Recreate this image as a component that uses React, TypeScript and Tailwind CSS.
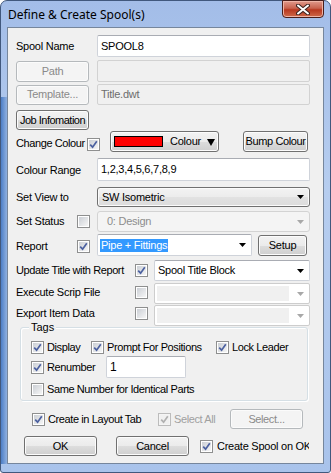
import { ReactNode } from "react";

const font =
  "font-['Liberation_Sans',Arial,sans-serif] text-[11px] leading-[13px] tracking-[-0.25px] whitespace-nowrap";

function Check({ checked, disabled }: { checked?: boolean; disabled?: boolean }) {
  return (
    <span
      className={`w-[13px] h-[13px] shrink-0 border p-[1px] flex ${
        disabled ? "border-[#bcbcbc] bg-[#f4f4f4]" : "border-[#8e8f8f] bg-white"
      }`}
    >
      <span
        className={`flex-1 flex items-center justify-center ${
          disabled ? "bg-[#f0f0f0]" : "bg-[linear-gradient(135deg,#cbcfd5,#f6f6f6)]"
        }`}
      >
        {checked && (
          <svg width="9" height="9" viewBox="0 0 9 9">
            <path
              d="M1.2 4.6 L3.6 7.2 L7.8 1.2"
              fill="none"
              stroke={disabled ? "#b0b0b0" : "#4c61a0"}
              strokeWidth="1.7"
            />
          </svg>
        )}
      </span>
    </span>
  );
}

function Btn({
  children,
  w,
  disabled,
  h = "h-[21px]",
}: {
  children: ReactNode;
  w: string;
  disabled?: boolean;
  h?: string;
}) {
  return (
    <div
      className={`${w} ${h} shrink-0 rounded-[3px] border flex items-center justify-center ${
        disabled
          ? "border-[#b5b9bc] bg-[#f4f4f4] text-[#8a8a8a] shadow-[inset_0_0_0_1px_#fbfbfb]"
          : "border-[#707070] text-black bg-[linear-gradient(#f2f2f2,#ebebeb_50%,#dddddd_50%,#cfcfcf)] shadow-[inset_0_0_0_1px_#fcfcfc]"
      }`}
    >
      {children}
    </div>
  );
}

function Arrow({ grey }: { grey?: boolean }) {
  return (
    <svg width="7" height="4" viewBox="0 0 7 4" className="shrink-0">
      <path d="M0 0h7L3.5 4z" fill={grey ? "#a8a8a8" : "#000"} />
    </svg>
  );
}

function Box({
  w,
  h,
  children,
  disabled,
}: {
  w: string;
  h: string;
  children?: ReactNode;
  disabled?: boolean;
}) {
  return (
    <div
      className={`${w} ${h} shrink-0 rounded-[2px] border flex items-center pl-[3px] ${
        disabled
          ? "border-[#d2d2d2] bg-[#f0f0f0] text-[#6d6d6d]"
          : "border-[#cfd3da] border-t-[#a9acb3] bg-white text-black"
      }`}
    >
      {children}
    </div>
  );
}

function Combo({
  w,
  h = "h-[21px]",
  kind,
  children,
}: {
  w: string;
  h?: string;
  kind: "list" | "edit" | "disabled" | "empty";
  children?: ReactNode;
}) {
  if (kind === "list") {
    return (
      <div
        className={`${w} ${h} shrink-0 rounded-[3px] border border-[#707070] bg-[linear-gradient(#f3f3f3,#ececec_50%,#e2e2e2_50%,#dcdcdc)] shadow-[inset_0_0_0_1px_#fbfbfb] flex items-center pl-[4px] pr-[5px]`}
      >
        <span className="flex-1">{children}</span>
        <Arrow />
      </div>
    );
  }
  if (kind === "disabled") {
    return (
      <div
        className={`${w} ${h} shrink-0 rounded-[3px] border border-[#d3d3d3] bg-[#f4f4f4] flex items-center pl-[9px] pr-[5px] text-[#8d8d8d]`}
      >
        <span className="flex-1">{children}</span>
        <Arrow grey />
      </div>
    );
  }
  if (kind === "empty") {
    return (
      <div
        className={`${w} ${h} shrink-0 rounded-[2px] border border-[#cdcdcd] bg-white flex items-center p-[2px] pr-[5px]`}
      >
        <span className="flex-1 self-stretch bg-[#f0f0f0] mr-[8px]" />
        <Arrow grey />
      </div>
    );
  }
  return (
    <div
      className={`${w} ${h} shrink-0 rounded-[2px] border border-[#cfd3da] border-t-[#a9acb3] bg-white flex items-center pl-[2px] pr-[5px]`}
    >
      <span className="flex-1 flex">{children}</span>
      <Arrow />
    </div>
  );
}

export default function App() {
  return (
    <div
      className={`w-[331px] h-[473px] rounded-t-[7px] rounded-b-[3px] border border-[#41587d] bg-[linear-gradient(180deg,#a3bde8,#b6cdef_40%,#a9c3eb)] flex flex-col ${font}`}
    >
      <div className="h-[26px] flex items-start justify-between pl-[7px] pr-[6px]">
        <span className="mt-[6px] text-[12px] leading-[15px] tracking-normal font-['Noto_Sans',sans-serif] text-black">
          Define &amp; Create Spool(s)
        </span>
        <div className="w-[42px] h-[18px] -mt-px rounded-b-[4px] border border-[#4a1e1a] bg-[linear-gradient(#e09a8c,#c8624e_45%,#b8381f_55%,#cf6a4a)] shadow-[inset_0_0_0_1px_#eeb4a6] flex items-center justify-center">
          <svg width="14" height="11" viewBox="0 0 14 11">
            <path d="M2 1.5 L12 9.5 M12 1.5 L2 9.5" stroke="#3d2420" strokeWidth="4" strokeLinecap="round" />
            <path d="M2 1.5 L12 9.5 M12 1.5 L2 9.5" stroke="#ffffff" strokeWidth="2" strokeLinecap="round" />
          </svg>
        </div>
      </div>

      <div className="flex-1 flex mb-[8px]">
        <div className="w-[6px] mt-[70px] bg-[linear-gradient(90deg,#4d7ec6,#8fb0e0)]" />
        <div className="flex-1 border border-[#76869c] bg-[#f0f0f0] flex flex-col pl-[8px] text-black">
          {/* Spool Name */}
          <div className="mt-[7px] h-[22px] flex items-center">
            <span className="w-[81px]">Spool Name</span>
            <Box w="w-[213px]" h="h-[22px]">SPOOL8</Box>
          </div>
          {/* Path */}
          <div className="mt-[3px] h-[22px] flex items-center">
            <Btn w="w-[73px]" disabled>Path</Btn>
            <span className="w-[8px]" />
            <Box w="w-[213px]" h="h-[22px]" disabled />
          </div>
          {/* Template */}
          <div className="mt-[2px] h-[21px] flex items-center">
            <Btn w="w-[73px]" h="h-[20px]" disabled>Template...</Btn>
            <span className="w-[8px]" />
            <Box w="w-[213px]" h="h-[21px]" disabled>Title.dwt</Box>
          </div>
          {/* Job information */}
          <div className="mt-[5px] h-[20px] flex items-center">
            <Btn w="w-[73px]" h="h-[20px]">
              <span className="tracking-[-0.5px]">Job Infomation</span>
            </Btn>
          </div>
          {/* Change colour */}
          <div className="mt-[1px] h-[21px] flex items-center">
            <span className="w-[71px] mt-[3px] tracking-[-0.4px]">Change Colour</span>
            <span className="mt-[5px]">
              <Check checked />
            </span>
            <span className="w-[10px]" />
            <Btn w="w-[109px]">
              <span className="w-[49px] h-[11px] border border-black bg-[#ff0000]" />
              <span className="ml-[7px]">Colour</span>
              <svg width="8" height="8" viewBox="0 0 8 8" className="ml-[6px]">
                <path d="M0 1h8L4 8z" fill="#000" />
              </svg>
            </Btn>
            <span className="w-[24px]" />
            <Btn w="w-[65px]">
              <span className="tracking-[-0.4px]">Bump Colour</span>
            </Btn>
          </div>
          {/* Colour range */}
          <div className="mt-[6px] h-[23px] flex items-center">
            <span className="w-[81px] mt-[2px]">Colour Range</span>
            <Box w="w-[213px]" h="h-[23px]">1,2,3,4,5,6,7,8,9</Box>
          </div>
          {/* Set view */}
          <div className="mt-[6px] h-[20px] flex items-center">
            <span className="w-[81px]">Set View to</span>
            <Combo w="w-[213px]" h="h-[20px]" kind="list">SW Isometric</Combo>
          </div>
          {/* Set status */}
          <div className="mt-[4px] h-[21px] flex items-center">
            <span className="w-[61px]">Set Status</span>
            <Check />
            <span className="w-[7px]" />
            <Combo w="w-[213px]" kind="disabled">0: Design</Combo>
          </div>
          {/* Report */}
          <div className="mt-[2px] h-[22px] flex items-center">
            <span className="w-[61px] mt-[2px]">Report</span>
            <span className="mt-[3px]">
              <Check checked />
            </span>
            <span className="w-[7px]" />
            <Combo w="w-[155px]" h="h-[22px]" kind="edit">
              <span className="bg-[#3399ff] text-white px-px leading-[13px]">Pipe + Fittings</span>
            </Combo>
            <span className="w-[6px]" />
            <Btn w="w-[49px]">Setup</Btn>
          </div>
          {/* Update title */}
          <div className="mt-[4px] h-[21px] flex items-center">
            <span className="w-[119px] tracking-[-0.4px]">Update Title with Report</span>
            <Check checked />
            <span className="w-[6px]" />
            <Combo w="w-[156px]" kind="edit">
              <span className="pl-px">Spool Title Block</span>
            </Combo>
          </div>
          {/* Execute */}
          <div className="mt-[2px] h-[21px] flex items-center">
            <span className="w-[119px] -mt-[3px]">Execute Scrip File</span>
            <span className="-mt-[2px]">
              <Check />
            </span>
            <span className="w-[6px]" />
            <Combo w="w-[156px]" kind="empty" />
          </div>
          {/* Export */}
          <div className="mt-[1px] h-[21px] flex items-center">
            <span className="w-[119px] -mt-[4px]">Export Item Data</span>
            <span className="-mt-[4px]">
              <Check />
            </span>
            <span className="w-[6px]" />
            <Combo w="w-[156px]" kind="empty" />
          </div>

          {/* Tags group */}
          <div className="mt-[1px] ml-[4px] w-[288px] border border-[#d5dfe5] rounded-[3px] pl-[10px] pb-[3px] shadow-[inset_1px_1px_0_#fff,1px_1px_0_#fff] flex flex-col">
            <span className="-mt-[7px] -ml-[2px] px-[2px] self-start bg-[#f0f0f0] tracking-normal">Tags</span>
            <div className="mt-[6px] h-[15px] flex items-center tracking-[-0.4px]">
              <Check checked />
              <span className="ml-[3px] w-[44px]">Display</span>
              <Check checked />
              <span className="ml-[3px] w-[109px]">Prompt For Positions</span>
              <Check checked />
              <span className="ml-[3px]">Lock Leader</span>
            </div>
            <div className="mt-[1px] h-[22px] flex items-center tracking-[-0.4px]">
              <Check checked />
              <span className="ml-[3px] w-[59px]">Renumber</span>
              <Box w="w-[80px]" h="h-[22px]">
                <span className="text-[12px]">1</span>
              </Box>
            </div>
            <div className="mt-[4px] h-[15px] flex items-center tracking-[-0.4px]">
              <Check />
              <span className="ml-[3px]">Same Number for Identical Parts</span>
            </div>
          </div>

          {/* Layout tab */}
          <div className="mt-[8px] h-[20px] flex items-center pl-[16px] tracking-[-0.4px]">
            <Check checked />
            <span className="ml-[3px] w-[110px]">Create in Layout Tab</span>
            <Check checked disabled />
            <span className="ml-[3px] w-[56px] text-[#a0a0a0]">Select All</span>
            <Btn w="w-[73px]" h="h-[20px]" disabled>
              Select...
            </Btn>
          </div>
          {/* OK row */}
          <div className="mt-[7px] h-[20px] flex items-center pl-[8px]">
            <Btn w="w-[73px]" h="h-[20px]">OK</Btn>
            <span className="w-[19px]" />
            <Btn w="w-[73px]" h="h-[20px]">Cancel</Btn>
            <span className="w-[11px]" />
            <Check checked />
            <span className="ml-[4px] overflow-hidden w-[92px]">Create Spool on OK</span>
          </div>
        </div>
        <div className="w-[6px]" />
      </div>
    </div>
  );
}
